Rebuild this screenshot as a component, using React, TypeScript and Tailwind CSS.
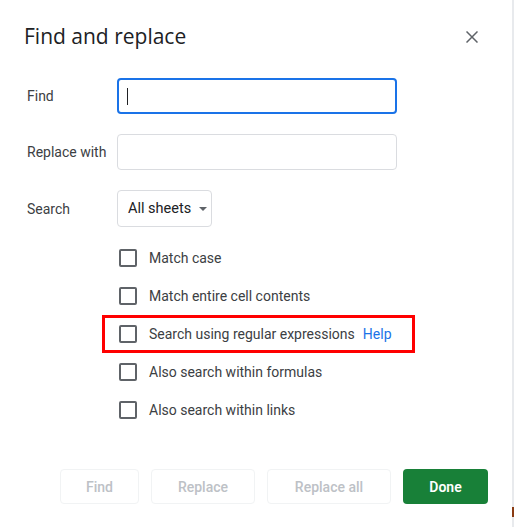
import React from 'react'

const options = [
  'Match case',
  'Match entire cell contents',
  'Search using regular expressions',
  'Also search within formulas',
  'Also search within links',
]

function CloseIcon() {
  return (
    <svg width="12" height="12" viewBox="0 0 12 12" className="text-[#5f6368]">
      <path d="M0.5 0.5L11.5 11.5M11.5 0.5L0.5 11.5" stroke="currentColor" strokeWidth="1.5" />
    </svg>
  )
}

export default function App() {
  return (
    <div className="flex h-[527px] w-[514px] bg-white font-['Roboto',sans-serif] text-[#3c4043]">
      <div className="flex w-[512px] flex-col bg-white px-6">
        {/* header */}
        <div className="flex h-[74px] items-start justify-between pt-[21px]">
          <h1 className="font-['Open_Sans',sans-serif] text-[21px] leading-[30px] text-[#202124]">Find and replace</h1>
          <button className="mr-[10px] mt-[10px]"><CloseIcon /></button>
        </div>

        <div className="mt-[4px] flex flex-col gap-5 pl-[3px]">
          <div className="flex items-center">
            <label className="w-[90px] text-sm">Find</label>
            <div className="flex h-9 w-[280px] items-center rounded border-2 border-[#1a73e8] px-2">
              <span className="h-[17px] w-px bg-[#202124]" />
            </div>
          </div>
          <div className="flex items-center">
            <label className="w-[90px] text-sm">Replace with</label>
            <div className="h-9 w-[280px] rounded border border-[#dadce0]" />
          </div>
          <div className="flex items-center">
            <label className="w-[90px] text-sm">Search</label>
            <div className="flex h-[37px] w-[95px] items-center gap-[8px] rounded border border-[#dadce0] pl-[10px]">
              <span className="text-[14.5px] text-[#202124]">All sheets</span>
              <svg width="8" height="4" viewBox="0 0 8 4"><path d="M0 0L8 0L4 4Z" fill="#5f6368" /></svg>
            </div>
          </div>
        </div>

        <div className="mt-[12px] flex flex-col pl-[95px]">
          {options.map((o, i) => (
            <div key={o} className="relative flex h-[38px] items-center">
              <span className="h-[18px] w-[18px] rounded-[2px] border-2 border-[#5f6368]" />
              <span className="ml-[12px] text-sm">{o}</span>
              {i === 2 && <a className="ml-2 text-sm text-[#1a73e8]">Help</a>}
              {i === 2 && (
                <div className="absolute -left-[17px] top-0 h-[38px] w-[313px] border-[3px] border-[#ff0000]" />
              )}
            </div>
          ))}
        </div>

        <div className="mt-[40px] flex items-center justify-end gap-3 pl-[35px]">
          <button className="h-[35px] w-[79px] rounded border border-[#f1f3f4] text-sm font-medium text-[#bdc1c6]">Find</button>
          <button className="h-[35px] w-[104px] rounded border border-[#f1f3f4] text-sm font-medium text-[#bdc1c6]">Replace</button>
          <button className="h-[35px] w-[124px] rounded border border-[#f1f3f4] text-sm font-medium text-[#bdc1c6]">Replace all</button>
          <button className="h-[35px] w-[85px] rounded bg-[#188038] text-sm font-semibold text-white">Done</button>
        </div>
      </div>
      <div className="flex w-[2px] flex-col bg-[#e8eaed]">
        <div className="flex-1" />
        <div className="mb-[10px] h-[10px] w-[2px] bg-[#8a3b12]" />
      </div>
    </div>
  )
}
